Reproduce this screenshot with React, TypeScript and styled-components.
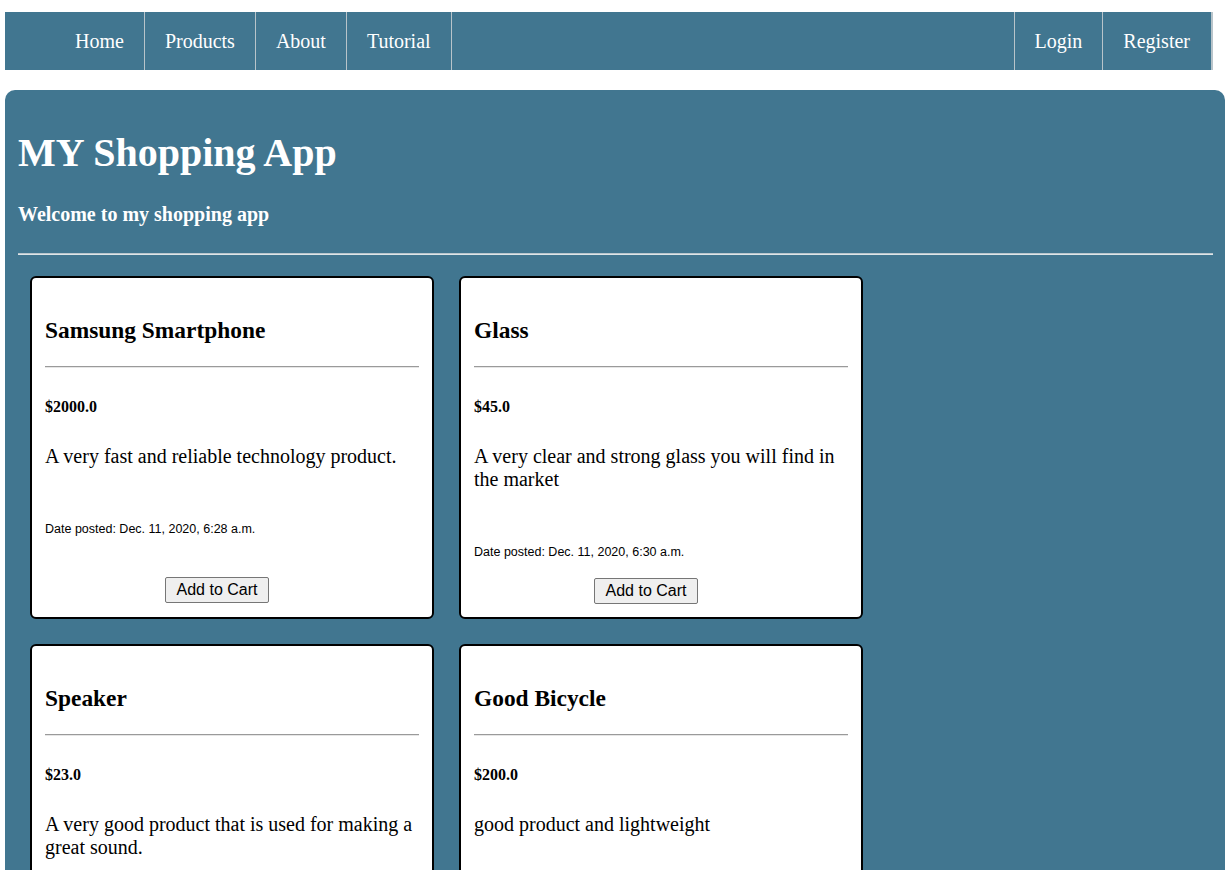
import styled, { createGlobalStyle } from 'styled-components'

interface IProduct {
    id: number
    name: string
    price: string
    description: string
    date: string
}

const products: IProduct[] = [
    {
        id: 1,
        name: 'Samsung Smartphone',
        price: '$2000.0',
        description: 'A very fast and reliable technology product.',
        date: 'Dec. 11, 2020, 6:28 a.m.',
    },
    {
        id: 2,
        name: 'Glass',
        price: '$45.0',
        description: 'A very clear and strong glass you will find in the market',
        date: 'Dec. 11, 2020, 6:30 a.m.',
    },
    {
        id: 3,
        name: 'Speaker',
        price: '$23.0',
        description: 'A very good product that is used for making a great sound.',
        date: 'Dec. 11, 2020, 6:32 a.m.',
    },
    {
        id: 4,
        name: 'Good Bicycle',
        price: '$200.0',
        description: 'good product and lightweight',
        date: 'Dec. 11, 2020, 6:35 a.m.',
    },
]

const leftLinks = ['Home', 'Products', 'About', 'Tutorial']
const rightLinks = ['Login', 'Register']

const App: React.FC = () => {
    return (
        <>
            <GlobalStyle />
            <NavBar>
                <NavGroup>
                    {leftLinks.map((link) => (
                        <NavLink key={link} href="#" $side="left">{link}</NavLink>
                    ))}
                </NavGroup>
                <NavSpacer />
                <NavGroup>
                    {rightLinks.map((link, index) => (
                        <NavLink key={link} href="#" $side="right" $last={index === rightLinks.length - 1}>
                            {link}
                        </NavLink>
                    ))}
                </NavGroup>
            </NavBar>
            <Panel>
                <Title>MY Shopping App</Title>
                <Subtitle>Welcome to my shopping app</Subtitle>
                <PanelRule />
                <CardGrid>
                    {products.map(({ id, name, price, description, date }) => (
                        <Card key={id}>
                            <CardTitle>{name}</CardTitle>
                            <CardRule />
                            <Price>{price}</Price>
                            <Description>{description}</Description>
                            <DatePosted>Date posted: {date}</DatePosted>
                            <CartForm>
                                <CartButton type="button">Add to Cart</CartButton>
                            </CartForm>
                        </Card>
                    ))}
                </CardGrid>
            </Panel>
        </>
    )
}

const GlobalStyle = createGlobalStyle`
    html {
        overflow: hidden;
    }

    body {
        margin: 0;
        background: #fff;
        font-family: "Liberation Serif", "Times New Roman", serif;
    }
`;

const NavBar = styled.nav`
    display: flex;
    height: 58px;
    margin: 12px 12px 0 5px;
    padding-left: 50px;
    background: #417690;
`;

const NavGroup = styled.div`
    display: flex;
`;

const NavSpacer = styled.div`
    flex: 1;
`;

const NavLink = styled.a<{ $side: 'left' | 'right'; $last?: boolean }>`
    display: flex;
    align-items: center;
    padding: 0 20px;
    color: #fff;
    font-size: 20px;
    line-height: 23px;
    text-decoration: none;
    ${({ $side }) => $side === 'left' ? 'border-right: 1px solid #b8c4ca;' : 'border-left: 1px solid #b8c4ca;'}
    ${({ $last }) => $last ? 'border-right: 2px solid #b8c4ca; padding-right: 21px;' : ''}
`;

const Panel = styled.main`
    margin: 20px 0 0 5px;
    padding: 40px 12px 40px 13px;
    background: #417690;
    border-radius: 10px 10px 0 0;
    color: #fff;
`;

const Title = styled.h1`
    margin: 0;
    font-size: 40px;
    line-height: 46px;
    font-weight: bold;
`;

const Subtitle = styled.h3`
    margin: 27px 0 0;
    font-size: 20px;
    line-height: 23px;
    font-weight: bold;
`;

const PanelRule = styled.hr`
    margin: 27px 0 0;
    height: 0;
    border: none;
    border-top: 1px solid #b9c6cd;
    border-bottom: 1px solid #dfe5e8;
`;

const CardGrid = styled.div`
    display: grid;
    grid-template-columns: repeat(2, 404px);
    gap: 25px;
    margin-top: 21px;
    padding-left: 12px;
`;

const Card = styled.article`
    display: flex;
    flex-direction: column;
    box-sizing: border-box;
    height: 343px;
    padding: 13px 13px 14px;
    background: #fff;
    border: 2px solid #000;
    border-radius: 6px;
    color: #000;
`;

const CardTitle = styled.h3`
    margin: 25.5px 0 0;
    font-size: 23.4px;
    line-height: 27px;
    font-weight: bold;
`;

const CardRule = styled.hr`
    margin: 22.5px 0 0;
    width: 100%;
    height: 0;
    border: none;
    border-top: 1px solid #9a9a9a;
    border-bottom: 1px solid #e6e6e6;
`;

const Price = styled.h5`
    margin: 29.5px 0 0;
    font-size: 16px;
    line-height: 18px;
    font-weight: bold;
`;

const Description = styled.p`
    margin: 29px 0 0;
    font-size: 20px;
    line-height: 23px;
`;

const DatePosted = styled.small`
    display: block;
    margin: 54px 0 19px;
    font-family: "Liberation Sans", Arial, sans-serif;
    font-size: 12.5px;
    line-height: 14px;
`;

const CartForm = styled.form`
    margin-top: auto;
    padding-right: 30px;
    text-align: center;
`;

const CartButton = styled.button`
    height: 26px;
    padding: 0 11px;
    font-family: "Liberation Sans", Arial, sans-serif;
    font-size: 16px;
    line-height: 18px;
    color: #000;
    background: #efefef;
    border: 1px solid #767676;
    border-radius: 2px;
    cursor: pointer;
`;

export default App;
